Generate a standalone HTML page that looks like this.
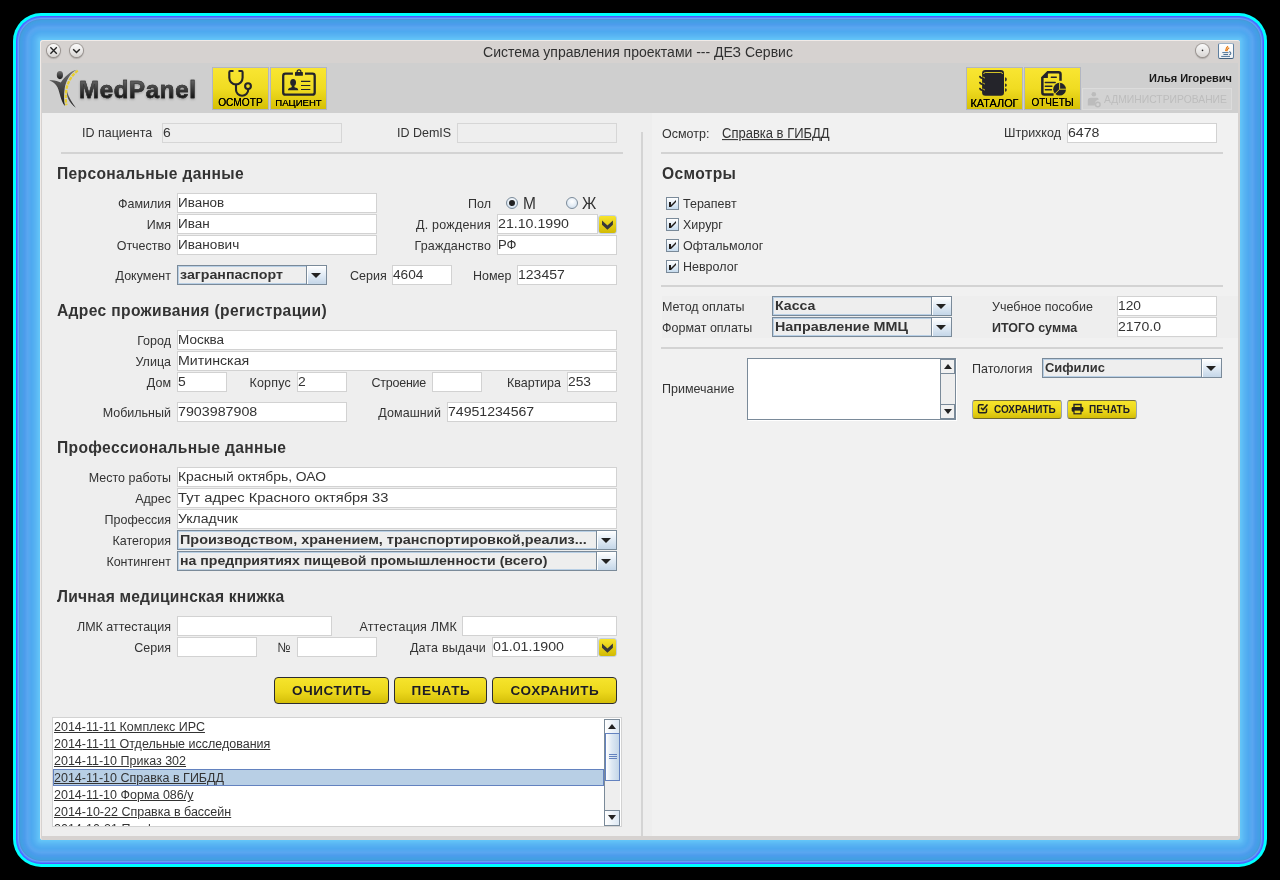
<!DOCTYPE html>
<html lang="ru">
<head>
<meta charset="utf-8">
<title>MedPanel</title>
<style>
html,body{margin:0;padding:0;}
body{width:1280px;height:880px;background:#000;overflow:hidden;position:relative;font-family:"Liberation Sans",sans-serif;font-size:12.5px;color:#333;}
*{box-sizing:border-box;}
#root{position:absolute;left:0;top:0;width:1280px;height:880px;will-change:transform;}
.a{position:absolute;}
#win{position:absolute;left:40px;top:40px;width:1200px;height:800px;background:#d6d2d0;border-radius:3px;}
#winhl{position:absolute;left:40px;top:40px;width:1200px;height:800px;border-radius:3px;border-top:1px solid #f1ebe8;border-left:1px solid #f1ebe8;}
#title{position:absolute;left:38px;top:42px;width:1200px;height:22px;line-height:21px;text-align:center;font-size:14px;color:#303030;}
#tb{position:absolute;left:42px;top:63px;width:1196px;height:50px;background:#cfcfcf;}
#lp{position:absolute;left:42px;top:113px;width:610px;height:723px;background:#eeeeee;}
#rp{position:absolute;left:652px;top:113px;width:586px;height:723px;background:#f1f1f1;}
/* labels */
.l{position:absolute;height:19px;line-height:20px;white-space:nowrap;color:#333;font-size:12.5px;transform:scaleY(1.07);transform-origin:0 14.3px;}
.r{left:0;text-align:right;}
/* text fields */
.f{position:absolute;height:20px;border:1px solid #d2d2d2;background:#fff;font-size:12.3px;line-height:18px;padding-left:0;white-space:nowrap;overflow:hidden;color:#333;}
.f.d{background:#eeeeee;border-color:#d6d6d6;}
/* headings */
.h{position:absolute;left:57px;margin-top:1px;font-size:15.6px;letter-spacing:.35px;font-weight:bold;color:#333;white-space:nowrap;line-height:20px;height:20px;}
/* separators */
.s{position:absolute;height:2px;background:#d3d3d3;}
/* combos */
.c{position:absolute;height:20px;border:1px solid #7a8a99;background:#eeeeee;font-weight:bold;font-size:12.3px;line-height:18px;padding-left:2px;white-space:nowrap;overflow:hidden;color:#333;box-shadow:inset 0 0 0 1px #b8cfe5;}
.c i{position:absolute;right:0;top:0;width:20px;height:18px;border-left:1px solid #7a8a99;background:linear-gradient(#ffffff 0%,#e4edf6 45%,#c4d6e8 100%);box-shadow:inset 1px 1px 0 #fff;}
.c i:after{content:"";position:absolute;left:4px;top:7px;border-left:5px solid transparent;border-right:5px solid transparent;border-top:5px solid #222;}
.big{font-size:15.5px;line-height:19px;}
.rd{position:absolute;width:12px;height:12px;border-radius:50%;border:1px solid #7a8a99;background:radial-gradient(circle at 50% 35%,#ffffff 0%,#e6eef6 50%,#c4d6e8 100%);}
.rd.on:after{content:"";position:absolute;left:2px;top:2px;width:6px;height:6px;border-radius:50%;background:#222;}
.db{position:absolute;width:19px;height:19px;border-radius:3px;border:1px solid #c3d0e2;background:linear-gradient(#f8e42c,#d2ba04);}
.db:after{content:"";position:absolute;left:0;top:0;width:17px;height:17px;background:#38383a;clip-path:polygon(3px 4.4px,8.45px 9.4px,13.9px 4.4px,13.9px 8.8px,8.45px 13.8px,3px 8.8px);}
.yb{position:absolute;height:27px;border:1px solid #2c2c30;border-radius:4px;background:linear-gradient(#f6e42c 0%,#ecd81c 55%,#d4be08 100%);text-align:center;font-weight:bold;font-size:13.5px;letter-spacing:.6px;padding-left:1px;line-height:25px;color:#1c1c26;white-space:nowrap;}
.li{position:absolute;left:0;width:551px;height:17px;line-height:17px;padding-left:1px;font-size:12.5px;text-decoration:underline;color:#333;white-space:nowrap;}
.li.sel{background:#b8cfe5;border:1px solid #6382bf;line-height:17px;padding-left:0;}
.sb{position:absolute;width:17px;background:#eeeeee;border-left:1px solid #7a8a99;}
.wb{position:absolute;width:13px;height:13px;border-radius:50%;background:linear-gradient(#fbfbfb,#d9d6d4);box-shadow:0 0 0 1px rgba(120,112,108,.45),0 1px 1px 1px rgba(90,84,80,.3);}
#mp{font-size:24px;font-weight:bold;line-height:28px;letter-spacing:.7px;-webkit-text-stroke:.5px #303030;background:linear-gradient(#5e5e5e 20%,#0c0c0c 85%);-webkit-background-clip:text;background-clip:text;color:transparent;filter:drop-shadow(0 1px 1px rgba(0,0,0,.25));}
.tbtn{position:absolute;top:67px;width:57px;height:43px;border:1px solid #b2b6c2;background:linear-gradient(#f9e632 0%,#f0dc22 50%,#d6c004 100%);text-align:center;}
.tbtn svg{position:absolute;left:0;top:0;}
.tbtn span{position:absolute;left:0;right:0;top:29px;font-size:10.3px;line-height:12px;color:#000;white-space:nowrap;text-shadow:0 0 .5px #000;}
.cb{position:absolute;width:13px;height:13px;border:1px solid #7a8a99;background:linear-gradient(#ffffff 0%,#e8f0f8 40%,#c6dbee 100%);}
.cb:after{content:"";position:absolute;left:0;top:0;width:11px;height:11px;background:#1e1a18;clip-path:polygon(2px 4px,4px 4px,4px 7px,9px 2px,9px 4px,4px 9px,2px 9px);}
.yb.sm{height:19px;font-size:10px;letter-spacing:0;line-height:17px;border-color:#77703a #9aa4b0 #6e6830 #9aa4b0;border-radius:3px;text-align:left;padding-left:21px;font-weight:bold;}
.yb.sm svg{position:absolute;left:4px;top:1px;}
.sb b{position:absolute;left:0;width:100%;height:15px;background:linear-gradient(90deg,#ffffff,#dde8f3);border:1px solid #7a8a99;border-left:0;}
.sb b.up{top:0;}.sb b.dn{bottom:0;}
.sb b:after{content:"";position:absolute;left:3px;top:4px;border-left:4.5px solid transparent;border-right:4.5px solid transparent;}
.sb b.up:after{border-bottom:5px solid #222;}
.sb b.dn:after{border-top:5px solid #222;}
.sb u{position:absolute;left:0;width:15px;border:1px solid #6382bf;background:linear-gradient(90deg,#ffffff 0%,#dde8f3 45%,#c4d6e8 100%);}
.f span,.c span{display:inline-block;transform-origin:0 50%;}
.sb u s{position:absolute;left:3px;top:20px;width:8px;height:5px;border-top:1px solid #6382bf;border-bottom:1px solid #6382bf;}
.sb u s:after{content:"";position:absolute;left:0;top:1px;width:8px;height:1px;background:#6382bf;}
#ta .sb b{background:#f1f1f1;}
</style>
</head>
<body>
<div id="root">
<div class="a" style="left:13px;top:13px;width:1254px;height:854px;border-radius:28px;background:#00ffff"></div>
<div class="a" style="left:16px;top:16px;width:1248px;height:848px;border-radius:25px;background:#5858ff"></div>
<div class="a" style="left:17px;top:17px;width:1246px;height:846px;border-radius:24px;background:#4a88ff"></div>
<div class="a" style="left:18px;top:18px;width:1244px;height:844px;border-radius:23px;background:#6a9cf8"></div>
<div class="a" style="left:19px;top:19px;width:1242px;height:842px;border-radius:22px;background:#4c94d8"></div>
<div class="a" style="left:20px;top:20px;width:1240px;height:840px;border-radius:21px;background:#41a0e2"></div>
<div class="a" style="left:21px;top:21px;width:1238px;height:838px;border-radius:20px;background:#449fe4"></div>
<div class="a" style="left:22px;top:22px;width:1236px;height:836px;border-radius:19px;background:#469ee7"></div>
<div class="a" style="left:23px;top:23px;width:1234px;height:834px;border-radius:18px;background:#499dea"></div>
<div class="a" style="left:24px;top:24px;width:1232px;height:832px;border-radius:17px;background:#4c9cec"></div>
<div class="a" style="left:25px;top:25px;width:1230px;height:830px;border-radius:16px;background:#519fed"></div>
<div class="a" style="left:26px;top:26px;width:1228px;height:828px;border-radius:15px;background:#55a3ef"></div>
<div class="a" style="left:27px;top:27px;width:1226px;height:826px;border-radius:14px;background:#5aa6f0"></div>
<div class="a" style="left:28px;top:28px;width:1224px;height:824px;border-radius:13px;background:#57a7f0"></div>
<div class="a" style="left:29px;top:29px;width:1222px;height:822px;border-radius:12px;background:#54a8f0"></div>
<div class="a" style="left:30px;top:30px;width:1220px;height:820px;border-radius:11px;background:#51a8f0"></div>
<div class="a" style="left:31px;top:31px;width:1218px;height:818px;border-radius:10px;background:#4ea9f0"></div>
<div class="a" style="left:32px;top:32px;width:1216px;height:816px;border-radius:9px;background:#50acf0"></div>
<div class="a" style="left:33px;top:33px;width:1214px;height:814px;border-radius:8px;background:#53aef1"></div>
<div class="a" style="left:34px;top:34px;width:1212px;height:812px;border-radius:7px;background:#56b1f2"></div>
<div class="a" style="left:35px;top:35px;width:1210px;height:810px;border-radius:6px;background:#58b4f2"></div>
<div class="a" style="left:36px;top:36px;width:1208px;height:808px;border-radius:5px;background:#5ab8f4"></div>
<div class="a" style="left:37px;top:37px;width:1206px;height:806px;border-radius:4px;background:#5dbcf5"></div>
<div class="a" style="left:38px;top:38px;width:1204px;height:804px;border-radius:3px;background:#60c0f6"></div>
<div class="a" style="left:39px;top:39px;width:1202px;height:802px;border-radius:2px;background:#62c4f8"></div>
<div id="win"></div>
<div id="winhl"></div>
<div id="title">Система управления проектами --- ДЕЗ Сервис</div>
<div id="tb"></div>
<div id="lp"></div>
<div id="rp"></div>
<!-- title buttons -->
<div class="wb" style="left:47px;top:44px"><svg width="13" height="13" viewBox="0 0 13 13"><path d="M3.4 3.300l6.400 6.400M9.800 3.300l-6.400 6.400" stroke="#222" stroke-width="1.300" fill="none"/></svg></div>
<div class="wb" style="left:70px;top:44px"><svg width="13" height="13" viewBox="0 0 13 13"><path d="M3.200 5.200l3.300 3.300l3.300-3.300" stroke="#222" stroke-width="1.400" fill="none"/></svg></div>
<div class="wb" style="left:1196px;top:44px"><svg width="13" height="13" viewBox="0 0 13 13"><circle cx="6.500" cy="6.400" r=".8" fill="#222"/></svg></div>
<div class="a" style="left:1218px;top:43px;width:16px;height:16px;border:1px solid #5f80a0;border-top-color:#9db3c8;border-bottom-color:#3f5f7e;border-radius:2px;background:linear-gradient(#ffffff,#eef1f4)">
<svg class="a" style="left:0;top:0" width="14" height="14" viewBox="0 0 14 14"><path d="M9 2.200c-2.200 1.600-2 2.600-2.400 5M10.200 3.700c-2 1.200-1.900 2-2.500 3.600" stroke="#e8780c" stroke-width="1.100" fill="none"/><path d="M3.300 8.600h6.200M4.400 10.500h4.600M2.200 12.400h8.800" stroke="#4f7396" stroke-width="1" fill="none"/><path d="M10 7.700c2.400.2 2.400 2.800.2 3" stroke="#4f7396" stroke-width="1.100" fill="none"/></svg></div>
<!-- logo -->
<svg class="a" style="left:44px;top:64px" width="50" height="50" viewBox="0 0 50 50">
<defs><linearGradient id="lg" x1="0" y1="0" x2="0" y2="1"><stop offset="0" stop-color="#707070"/><stop offset="1" stop-color="#1a1a1a"/></linearGradient></defs>
<ellipse cx="15.900" cy="11.100" rx="3.100" ry="4.100" fill="url(#lg)"/>
<path d="M5.200 16.400C9.700 15.700 13.600 16.800 16.800 18.600C20.300 13.400 26.200 7 32.600 5.800C26.200 9.200 21.800 16.800 20.700 24.300C19.800 30.800 19.800 36.800 21 42C16.400 36.400 15.900 28.400 13.600 23.400C11.800 19.800 8.800 17.500 5.200 16.400z" fill="url(#lg)"/>
<path d="M23 27C23.800 30 25.100 33.200 27 36.500C28.500 39 30 41.500 31.900 43.800C28.400 41 25.700 38 24.300 35C23.100 32.300 22.500 29.600 23 27z" fill="url(#lg)"/>
<path d="M33.800 6.600C27.800 11.200 22.800 18.800 22 28.300C21.600 32.900 21.700 36.900 22.400 41.200" stroke="#e8cf30" stroke-width="2.300" stroke-dasharray="3.500 1.100" fill="none"/>
</svg>
<div class="a" id="mp" style="left:79px;top:76px">MedPanel</div>
<!-- toolbar buttons -->
<div class="tbtn" style="left:212px"><svg width="55" height="30" viewBox="0 0 55 30"><g stroke="#24242a" stroke-width="2.1" fill="none" stroke-linecap="round"><path d="M19.7 3H17.5Q16.3 3 16.3 4.2V9.85A6.65 6.65 0 0 0 29.6 9.85V4.2Q29.6 3 28.4 3H26.3"/><path d="M23 16.6V21.65A6.1 6.1 0 0 0 35.2 21.65V21.2"/><circle cx="35" cy="18.1" r="2.9"/></g></svg><span style="font-size:10.2px">ОСМОТР</span></div>
<div class="tbtn" style="left:270px"><svg width="55" height="30" viewBox="0 0 55 30"><path d="M21.9 5.7H14.4Q12.2 5.7 12.2 7.9V24.4Q12.2 26.6 14.4 26.6H41.5Q43.7 26.6 43.7 24.4V7.9Q43.7 5.7 41.5 5.7H34" stroke="#24242a" stroke-width="2.3" fill="none"/><rect x="24" y="4" width="7.9" height="3.8" rx=".6" fill="#24242a"/><circle cx="28" cy="3.7" r="1.9" stroke="#24242a" stroke-width="1.3" fill="none"/><ellipse cx="22.1" cy="14.6" rx="2.9" ry="3.5" fill="#24242a"/><path d="M16.9 22.3C16.9 20 19 19.9 20.6 19.3L21 17.2h2.2L23.6 19.3C25.2 19.9 27.3 20 27.3 22.3z" fill="#24242a"/><path d="M30 13.4h9.3M30 17.5h9.3M30 21.5h9.3" stroke="#24242a" stroke-width="1.2"/></svg><span style="font-size:9.6px">ПАЦИЕНТ</span></div>
<div class="tbtn" style="left:966px"><svg style="left:1px" width="54" height="30" viewBox="0 0 54 30"><rect x="14.1" y="2.1" width="21.9" height="25.7" rx="3.3" fill="#24242a"/><path d="M15.6 6Q15.7 4.5 17.6 4.5H32.6Q34.5 4.5 34.6 6" stroke="#e8d626" stroke-width=".9" fill="none"/><g stroke="#24242a" stroke-width="1.9" fill="none" stroke-linecap="round"><path d="M12 8.6q.2 1.3 2 1.5l2.5.5"/><path d="M12 14.6q.2 1.3 2 1.5l2.5.5"/><path d="M12 20.6q.2 1.3 2 1.5l2.5.5"/></g><g stroke="#e8d626" stroke-width=".8" fill="none"><path d="M14.5 9q1.5.2 2.5 1.2"/><path d="M14.5 15q1.5.2 2.5 1.2"/><path d="M14.5 21q1.5.2 2.5 1.2"/></g><path d="M37.1 9.2q1.9.2 1.7 2.2t-1.7 2.2zM37.1 15.6q1.9.1 1.7 1.6t-1.7 1.6zM37.1 20.2q1.9.1 1.7 1.8t-1.7 1.8z" fill="#24242a"/></svg><span style="font-size:10.9px">КАТАЛОГ</span></div>
<div class="tbtn" style="left:1024px"><svg width="55" height="30" viewBox="0 0 55 30"><path d="M35.5 12.7V6.25Q35.5 4.25 33.5 4.25H22.8L17.35 9.7V24.5Q17.35 26.5 19.35 26.5H28.6" stroke="#24242a" stroke-width="2.5" fill="none"/><path d="M22.9 4.3V10.1H17.3z" fill="#24242a"/><path d="M26.3 9.3h5M20.3 14.5h9.9M20.3 18.2h6.6M20.3 21.8h6.2" stroke="#24242a" stroke-width="1.4" stroke-linecap="round"/><circle cx="34.6" cy="21.2" r="6.4" fill="#24242a"/><path d="M34.6 21.2V14.5M34.6 21.2H41.3M34.6 21.2L29.8 26" stroke="#e2ce1c" stroke-width="1"/></svg><span style="font-size:10px">ОТЧЕТЫ</span></div>
<div class="a" style="left:1100px;top:71px;width:132px;text-align:right;font-size:11px;font-weight:bold;line-height:14px;color:#1a1a1a;white-space:nowrap">Илья Игоревич</div>
<div class="a" style="left:1082px;top:88px;width:150px;height:22px;border:1px solid #dcdcdc;background:#d3d3d3;color:#bdbdbd;font-size:10.35px;line-height:21px;padding-left:21px;white-space:nowrap">АДМИНИСТРИРОВАНИЕ
<svg class="a" style="left:3px;top:1px" width="18" height="18" viewBox="0 0 18 18"><circle cx="7.8" cy="4.3" r="2.3" fill="#bcbcbc"/><path d="M1.8 15.5v-5c0-2 1.5-2.7 3-2.7h5.5c1.500 0 2.3.7 2.6 1.6c-2.5.3-4 2-4 4.3v1.8z" fill="#bcbcbc"/><circle cx="11.8" cy="14.5" r="2.3" stroke="#bcbcbc" stroke-width="1.5" fill="none"/></svg></div>
<!-- ID row -->
<div class="l" style="left:82px;top:123px">ID пациента</div>
<div class="f d" style="left:162px;top:123px;width:180px"><span style="transform:scaleX(1.130)">6</span></div>
<div class="l" style="left:397px;top:123px">ID DemIS</div>
<div class="f d" style="left:457px;top:123px;width:160px"></div>
<div class="s" style="left:61px;top:152px;width:562px"></div>
<div class="a" style="left:641px;top:132px;width:2px;height:704px;background:#d4d4d4"></div>
<!-- personal -->
<div class="h" style="top:163px">Персональные данные</div>
<div class="l r" style="width:171px;top:194px">Фамилия</div>
<div class="f" style="left:177px;top:193px;width:200px"><span style="transform:scaleX(1.095)">Иванов</span></div>
<div class="l r" style="width:171px;top:215px">Имя</div>
<div class="f" style="left:177px;top:214px;width:200px"><span style="transform:scaleX(1.101)">Иван</span></div>
<div class="l r" style="width:171px;top:236px">Отчество</div>
<div class="f" style="left:177px;top:235px;width:200px"><span style="transform:scaleX(1.103)">Иванович</span></div>
<div class="l r" style="width:491px;top:194px">Пол</div>
<div class="rd on" style="left:506px;top:197px"></div>
<div class="l big" style="left:523px;top:194px">М</div>
<div class="rd" style="left:566px;top:197px"></div>
<div class="l big" style="left:582px;top:194px">Ж</div>
<div class="l r" style="width:491px;top:215px;letter-spacing:0.24px">Д. рождения</div>
<div class="f" style="left:497px;top:214px;width:101px"><span style="transform:scaleX(1.153)">21.10.1990</span></div>
<div class="db" style="left:598px;top:215px"></div>
<div class="l r" style="width:491px;top:236px;letter-spacing:0.14px">Гражданство</div>
<div class="f" style="left:497px;top:235px;width:120px"><span style="transform:scaleX(1.063)">РФ</span></div>
<div class="l r" style="width:171px;top:266px">Документ</div>
<div class="c" style="left:177px;top:265px;width:150px"><span style="transform:scaleX(1.156)">загранпаспорт</span><i></i></div>
<div class="l" style="left:350px;top:266px">Серия</div>
<div class="f" style="left:392px;top:265px;width:60px"><span style="transform:scaleX(1.114)">4604</span></div>
<div class="l" style="left:473px;top:266px">Номер</div>
<div class="f" style="left:517px;top:265px;width:100px"><span style="transform:scaleX(1.140)">123457</span></div>
<!-- address -->
<div class="h" style="top:300px">Адрес проживания (регистрации)</div>
<div class="l r" style="width:171px;top:331px">Город</div>
<div class="f" style="left:177px;top:330px;width:440px"><span style="transform:scaleX(1.099)">Москва</span></div>
<div class="l r" style="width:171px;top:352px">Улица</div>
<div class="f" style="left:177px;top:351px;width:440px"><span style="transform:scaleX(1.154)">Митинская</span></div>
<div class="l r" style="width:171px;top:373px">Дом</div>
<div class="f" style="left:177px;top:372px;width:50px"><span style="transform:scaleX(1.130)">5</span></div>
<div class="l r" style="width:291px;top:373px;letter-spacing:0.2px">Корпус</div>
<div class="f" style="left:297px;top:372px;width:50px"><span style="transform:scaleX(1.130)">2</span></div>
<div class="l r" style="width:426px;top:373px;letter-spacing:-0.25px">Строение</div>
<div class="f" style="left:432px;top:372px;width:50px"></div>
<div class="l r" style="width:561px;top:373px">Квартира</div>
<div class="f" style="left:567px;top:372px;width:50px"><span style="transform:scaleX(1.120)">253</span></div>
<div class="l r" style="width:171px;top:403px">Мобильный</div>
<div class="f" style="left:177px;top:402px;width:170px"><span style="transform:scaleX(1.159)">7903987908</span></div>
<div class="l r" style="width:441px;top:403px;letter-spacing:0.1px">Домашний</div>
<div class="f" style="left:447px;top:402px;width:170px"><span style="transform:scaleX(1.146)">74951234567</span></div>
<!-- professional -->
<div class="h" style="top:437px">Профессиональные данные</div>
<div class="l r" style="width:171px;top:468px">Место работы</div>
<div class="f" style="left:177px;top:467px;width:440px"><span style="transform:scaleX(1.126)">Красный октябрь, ОАО</span></div>
<div class="l r" style="width:171px;top:489px">Адрес</div>
<div class="f" style="left:177px;top:488px;width:440px"><span style="transform:scaleX(1.192)">Тут адрес Красного октября 33</span></div>
<div class="l r" style="width:171px;top:510px">Профессия</div>
<div class="f" style="left:177px;top:509px;width:440px"><span style="transform:scaleX(1.138)">Укладчик</span></div>
<div class="l r" style="width:171px;top:531px">Категория</div>
<div class="c" style="left:177px;top:530px;width:440px"><span style="transform:scaleX(1.172)">Производством, хранением, транспортировкой,реализ...</span><i></i></div>
<div class="l r" style="width:171px;top:552px">Контингент</div>
<div class="c" style="left:177px;top:551px;width:440px"><span style="transform:scaleX(1.147)">на предприятиях пищевой промышленности (всего)</span><i></i></div>
<!-- LMK -->
<div class="h" style="top:586px;letter-spacing:.2px">Личная медицинская книжка</div>
<div class="l r" style="width:171px;top:617px">ЛМК аттестация</div>
<div class="f" style="left:177px;top:616px;width:155px"></div>
<div class="l r" style="width:457px;top:617px;letter-spacing:0.15px">Аттестация ЛМК</div>
<div class="f" style="left:462px;top:616px;width:155px"></div>
<div class="l r" style="width:171px;top:638px">Серия</div>
<div class="f" style="left:177px;top:637px;width:80px"></div>
<div class="l r" style="width:291px;top:638px">№</div>
<div class="f" style="left:297px;top:637px;width:80px"></div>
<div class="l r" style="width:486px;top:638px;letter-spacing:0.17px">Дата выдачи</div>
<div class="f" style="left:492px;top:637px;width:106px"><span style="transform:scaleX(1.153)">01.01.1900</span></div>
<div class="db" style="left:598px;top:638px"></div>
<!-- buttons -->
<div class="yb" style="left:274px;top:677px;width:115px">ОЧИСТИТЬ</div>
<div class="yb" style="left:394px;top:677px;width:93px">ПЕЧАТЬ</div>
<div class="yb" style="left:492px;top:677px;width:125px">СОХРАНИТЬ</div>
<!-- list -->
<div class="a" style="left:52px;top:717px;width:570px;height:110px;border:1px solid #d2d2d2;background:#fff;overflow:hidden">
<div class="li" style="top:1px">2014-11-11 Комплекс ИРС</div>
<div class="li" style="top:18px">2014-11-11 Отдельные исследования</div>
<div class="li" style="top:35px">2014-11-10 Приказ 302</div>
<div class="li sel" style="top:51px">2014-11-10 Справка в ГИБДД</div>
<div class="li" style="top:69px">2014-11-10 Форма 086/у</div>
<div class="li" style="top:86px">2014-10-22 Справка в бассейн</div>
<div class="li" style="top:103px">2014-10-21 Профосмотр</div>
<div class="sb" style="left:551px;top:1px;height:107px;width:16px"><b class="up"></b><u style="top:14px;height:48px"><s></s></u><b class="dn" style="height:16px"></b></div>
</div>
<div class="l" style="left:662px;top:124px">Осмотр:</div>
<div class="l" style="left:722px;top:124px;font-size:13px;text-decoration:underline">Справка в ГИБДД</div>
<div class="l" style="left:1004px;top:123px">Штрихкод</div>
<div class="f" style="left:1067px;top:123px;width:150px"><span style="transform:scaleX(1.151)">6478</span></div>
<div class="s" style="left:661px;top:152px;width:562px"></div>
<div class="h" style="left:662px;top:163px">Осмотры</div>
<div class="cb" style="left:666px;top:197px"></div><div class="l" style="left:683px;top:194px">Терапевт</div>
<div class="cb" style="left:666px;top:218px"></div><div class="l" style="left:683px;top:215px">Хирург</div>
<div class="cb" style="left:666px;top:239px"></div><div class="l" style="left:683px;top:236px">Офтальмолог</div>
<div class="cb" style="left:666px;top:260px"></div><div class="l" style="left:683px;top:257px">Невролог</div>
<div class="s" style="left:661px;top:285px;width:562px"></div>
<div class="a" style="left:662px;top:296px;width:576px;height:42px;background:#eeeeee"></div>
<div class="l" style="left:662px;top:297px">Метод оплаты</div>
<div class="c" style="left:772px;top:296px;width:180px"><span style="transform:scaleX(1.147)">Касса</span><i></i></div>
<div class="l" style="left:662px;top:318px">Формат оплаты</div>
<div class="c" style="left:772px;top:317px;width:180px"><span style="transform:scaleX(1.165)">Направление ММЦ</span><i></i></div>
<div class="l" style="left:992px;top:297px">Учебное пособие</div>
<div class="f" style="left:1117px;top:296px;width:100px"><span style="transform:scaleX(1.120)">120</span></div>
<div class="l" style="left:992px;top:318px;font-weight:bold">ИТОГО сумма</div>
<div class="f" style="left:1117px;top:317px;width:100px"><span style="transform:scaleX(1.142)">2170.0</span></div>
<div class="s" style="left:661px;top:347px;width:562px"></div>
<div class="l" style="left:662px;top:379px">Примечание</div>
<div class="a" id="ta" style="left:747px;top:358px;width:209px;height:62px;border:1px solid #7a8a99;background:#fff;box-shadow:1px 1px 0 #fff">
<div class="sb" style="left:192px;top:0;height:60px;width:15px"><b class="up"></b><b class="dn"></b></div></div>
<div class="l" style="left:972px;top:359px">Патология</div>
<div class="c" style="left:1042px;top:358px;width:180px"><span style="transform:scaleX(1.052)">Сифилис</span><i></i></div>
<div class="yb sm" style="left:972px;top:400px;width:90px"><svg width="12" height="12" viewBox="0 0 12 12"><path d="M9.5 6.5v3a1.200 1.2 0 0 1-1.2 1.2h-5.6a1.200 1.2 0 0 1-1.2-1.2v-5.6a1.200 1.2 0 0 1 1.2-1.2h4" stroke="#222" stroke-width="1.5" fill="none"/><path d="M4 5.8l2 2l4.5-5.3" stroke="#222" stroke-width="1.6" fill="none"/></svg>СОХРАНИТЬ</div>
<div class="yb sm" style="left:1067px;top:400px;width:70px;padding-left:21px"><svg style="left:3px;top:2px" width="13" height="12" viewBox="0 0 13 12"><path d="M3 4v-2.5h7v2.5" stroke="#222" stroke-width="1.4" fill="none"/><rect x=".7" y="4" width="11.6" height="4.8" rx="1.2" fill="#222"/><rect x="3" y="7" width="7" height="3.8" fill="#e8d420" stroke="#222" stroke-width="1.2"/></svg>ПЕЧАТЬ</div>
</div>
</body>
</html>
